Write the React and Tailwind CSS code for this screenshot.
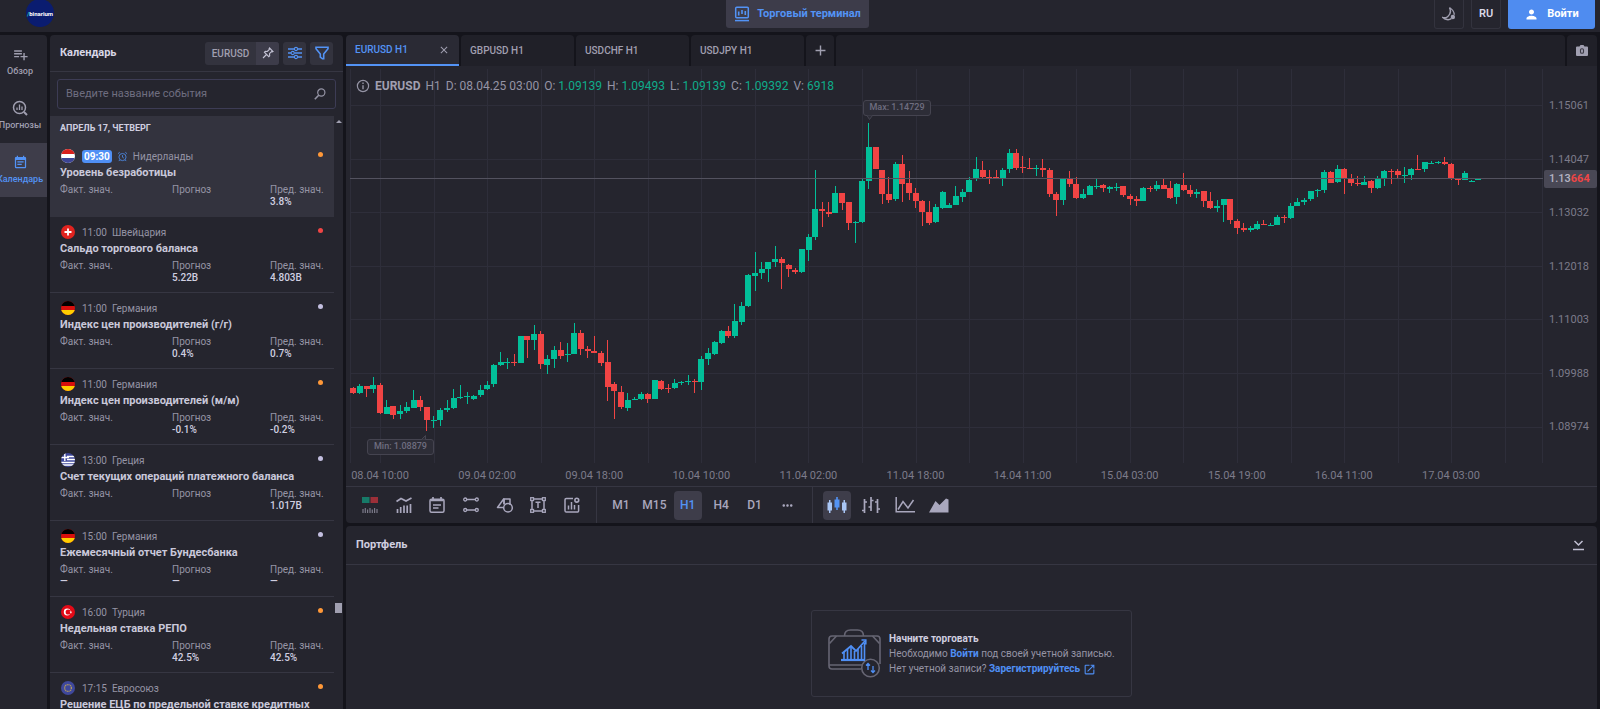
import {
  MdPlaylistAdd,
  MdOutlineOpenInNew,
  MdPerson,
  MdEventNote,
  MdAdd,
  MdClose,
  MdMoreHoriz,
} from "react-icons/md";

const PLOT_TOP = 69;
const PLOT_WIDTH = 1193;
const PLOT_HEIGHT = 394;
const STEP = 6.696;

// direction, high, body top, body bottom, low
const CANDLES = `
R387,388,393,394 G384,386,393,394 R386,386,389,397 G377,385,389,393 R383,385,413,414 G400,407,414,414
R406,406,415,419 G405,411,414,419 G402,407,411,413 G390,400,408,408 R396,400,407,411 R407,407,420,431
G416,420,421,428 G408,410,420,426 G400,408,410,412 G389,398,408,409 G385,397,398,399 G392,396,397,404
G395,396,399,400 G385,390,395,397 G381,385,389,390 G364,365,384,387 G352,362,365,366 G358,362,363,369
R354,362,363,366 G336,336,363,363 R336,336,340,358 G325,334,340,350 R331,334,364,369 G355,359,365,374
G346,350,359,368 R342,350,356,359 G343,354,355,362 G323,333,354,354 R330,333,349,355 R346,349,351,358
R336,351,353,353 R351,353,363,366 R340,362,387,401 R382,384,391,419 R386,392,407,409 G393,400,408,411
G397,399,400,400 G392,394,399,400 R393,394,399,403 G380,380,399,399 R380,381,389,390 R384,388,389,393
G379,383,388,389 G381,382,383,385 G375,381,382,385 R379,381,382,393 G356,359,382,390 G348,353,359,365
G341,342,354,355 G330,331,343,344 R326,331,336,338 G304,321,336,338 G302,306,322,325 G274,275,306,307
G252,273,276,291 G262,269,273,279 G262,262,269,282 G246,259,262,267 R257,259,263,289 R264,265,269,277
R268,270,272,274 G249,249,272,273 G234,237,250,261 G170,209,237,240 R202,209,211,227 R202,212,214,217
G186,193,213,213 R193,193,203,210 R202,202,223,230 G221,222,223,243 G179,181,222,223 G123,147,181,189
R147,147,169,169 R170,170,194,204 R177,194,200,203 G162,164,199,201 R155,164,184,202 R171,183,193,200
R188,193,201,208 R200,201,212,226 R201,212,223,225 G204,207,222,223 G191,192,208,209 G203,205,208,208
G186,196,205,205 G189,192,197,202 G177,180,192,192 G157,169,179,181 R161,170,177,178 R170,177,178,184
R170,177,179,179 G168,170,179,186 G149,153,169,173 R149,153,168,170 R156,167,168,173 R158,168,169,169
G165,168,169,176 R159,168,170,177 R168,170,194,197 R192,194,200,216 G179,179,200,205 R171,179,184,187
R177,184,198,199 G189,194,198,199 G185,186,195,195 G179,186,187,189 R184,185,188,192 G186,187,189,193
G183,187,188,191 R186,186,195,197 R194,196,199,205 R196,199,201,206 G187,188,201,201 R186,188,189,192
G181,185,189,191 R179,185,189,189 R181,188,198,199 G183,184,197,204 R173,185,190,191 R185,190,194,197
G189,192,194,198 R191,191,201,207 R192,201,208,209 G200,206,208,212 G199,199,205,222 R199,199,220,224
R219,221,228,234 R223,228,230,232 G226,228,230,232 G221,224,229,230 R220,224,225,225 G223,225,226,226
G215,217,225,225 R215,217,218,223 G203,206,218,219 G198,202,206,206 G198,200,202,205 G191,191,199,201
G189,190,191,197 G170,172,190,193 R171,172,183,183 G165,169,182,183 R168,169,179,194 R174,179,183,186
R176,183,184,186 G176,182,185,185 R180,181,188,193 G176,179,188,189 G170,171,179,186 R169,171,172,184
R169,171,175,178 G167,175,176,183 G168,169,175,180 R155,169,170,170 G162,162,169,172 G161,163,164,164
G161,162,163,164 R157,162,164,165 R163,164,179,180 R179,179,180,185 G171,173,180,180 G180,181,182,182
G178,179,180,180`
  .trim()
  .split(/\s+/)
  .map((s) => {
    const [high, top, bottom, low] = s.slice(1).split(",").map(Number);
    return { up: s[0] === "G", high, top, bottom, low };
  });

const PRICES = ["1.15061", "1.14047", "1.13032", "1.12018", "1.11003", "1.09988", "1.08974"];

const TIMES = [
  "08.04 10:00",
  "09.04 02:00",
  "09.04 18:00",
  "10.04 10:00",
  "11.04 02:00",
  "11.04 18:00",
  "14.04 11:00",
  "15.04 03:00",
  "15.04 19:00",
  "16.04 11:00",
  "17.04 03:00",
];

const EVENTS = [
  { time: "09:30", flag: "nl", country: "Нидерланды", title: "Уровень безработицы", values: ["", "", "3.8%"], level: "orange", soon: true },
  { time: "11:00", flag: "ch", country: "Швейцария", title: "Сальдо торгового баланса", values: ["", "5.22B", "4.803B"], level: "red" },
  { time: "11:00", flag: "de", country: "Германия", title: "Индекс цен производителей (г/г)", values: ["", "0.4%", "0.7%"], level: "gray" },
  { time: "11:00", flag: "de", country: "Германия", title: "Индекс цен производителей (м/м)", values: ["", "-0.1%", "-0.2%"], level: "orange" },
  { time: "13:00", flag: "gr", country: "Греция", title: "Счет текущих операций платежного баланса", values: ["", "", "1.017B"], level: "gray" },
  { time: "15:00", flag: "de", country: "Германия", title: "Ежемесячный отчет Бундесбанка", values: ["—", "—", "—"], level: "gray" },
  { time: "16:00", flag: "tr", country: "Турция", title: "Недельная ставка РЕПО", values: ["", "42.5%", "42.5%"], level: "orange" },
  { time: "17:15", flag: "eu", country: "Евросоюз", title: "Решение ЕЦБ по предельной ставке кредитных", values: ["", "", ""], level: "orange" },
];

const LABELS = ["Факт. знач.", "Прогноз", "Пред. знач."];

const LEVELS = {
  orange: "bg-[#ff9838]",
  red: "bg-[#f04545]",
  gray: "bg-[#c3bfe0]",
};

const Flag = ({ code }) => (
  <svg viewBox="0 0 14 14" className="size-[14px] shrink-0 rounded-full">
    {code === "nl" && (
      <>
        <rect width="14" height="14" fill="#fff" />
        <rect width="14" height="5" fill="#d8201c" />
        <rect y="9" width="14" height="5" fill="#3c4494" />
      </>
    )}
    {code === "ch" && (
      <>
        <rect width="14" height="14" fill="#e0231f" />
        <path d="M7 3.5v7M3.5 7h7" stroke="#fff" strokeWidth="1.8" />
      </>
    )}
    {code === "de" && (
      <>
        <rect width="14" height="14" fill="#d80f0c" />
        <rect width="14" height="5" fill="#000" />
        <rect y="9" width="14" height="5" fill="#ffce00" />
      </>
    )}
    {code === "gr" && (
      <>
        <rect width="14" height="14" fill="#3f489c" />
        <path d="M6 3.5h8M6 6.5h8M0 9.5h14M0 12h14" stroke="#fff" strokeWidth="1.3" />
        <path d="M3.8 0v8M0 4.5h8" stroke="#fff" strokeWidth="1.4" />
      </>
    )}
    {code === "tr" && (
      <>
        <rect width="14" height="14" fill="#e30a17" />
        <circle cx="6.2" cy="7" r="3.4" fill="#fff" />
        <circle cx="7.2" cy="7" r="2.6" fill="#e30a17" />
        <path d="M9.8 5.8l.4.9 1 .1-.8.6.3 1-.9-.6-.8.6.3-1-.8-.6 1-.1z" fill="#fff" />
      </>
    )}
    {code === "eu" && (
      <>
        <rect width="14" height="14" fill="#3f489c" />
        <circle cx="7" cy="7" r="3.4" fill="none" stroke="#b09a5c" strokeWidth="1.3" strokeDasharray="1.2 .58" />
      </>
    )}
  </svg>
);

const Icon = ({ size = "size-4", box = 16, children }) => (
  <svg
    viewBox={`0 0 ${box} ${box}`}
    className={`${size} shrink-0`}
    fill="none"
    stroke="currentColor"
    strokeWidth="1.5"
  >
    {children}
  </svg>
);

const Header = () => (
  <header className="grid h-8 shrink-0 grid-cols-[1fr_auto_1fr] items-start bg-[#25252e] pr-[5px]">
    <a
      href="#"
      className="ml-[26px] flex size-7 -mt-px items-center justify-center rounded-full bg-[#0a1c70] text-[6px] font-bold text-white"
    >
      <span className="text-[#1fc7a0]">/</span>binarium
    </a>
    <button className="flex h-7 w-[143px] items-center justify-center gap-[7px] rounded-b-[3px] bg-[#3d3c4a] text-[11px] font-bold whitespace-nowrap text-[#5393f5]">
      <Icon>
        <rect x="1.7" y="1.2" width="12.6" height="10.6" rx="1" />
        <path d="M1 14.6h14" />
        <path d="M4.7 5.5v4M8 4v4M11.3 5v4" strokeWidth="1.6" />
      </Icon>
      Торговый терминал
    </button>
    <div className="flex justify-end gap-[7px]">
      <button
        aria-label="Тема"
        className="flex h-[29px] w-[30px] items-center justify-center rounded-b-[3px] border border-t-0 border-[#33333e] text-[#a09fb0]"
      >
        <Icon size="size-3.5">
          <path d="M8.6.8c1.800 3.700.8 7.700-1.900 10-1.600 1.400-3.700 1.900-5.700 1.300 2.300 2.400 6.800 3.200 9.600 1.200" strokeWidth="1.700" />
          <path d="M8.600.8c3.400 1.700 5.300 5 5.400 8.200" strokeWidth="1.400" />
          <circle cx="12.400" cy="11.400" r="2.500" fill="currentColor" stroke="none" />
        </Icon>
      </button>
      <button className="h-[29px] w-[30px] rounded-b-[3px] border border-t-0 border-[#33333e] text-[11px] font-semibold text-[#d8d7e6]">
        RU
      </button>
      <button className="flex h-[29px] w-[87px] items-center justify-center gap-2 rounded-b-[3px] bg-[#4f8cf0] text-[11px] font-bold text-white">
        <MdPerson className="size-[15px]" />
        Войти
      </button>
    </div>
  </header>
);

const RailItem = ({ label, active, children }) => (
  <a
    href="#"
    className={`flex h-[54px] flex-col items-center gap-0.5 pt-[11px] pr-[7px] text-[9px] leading-[14px] font-medium whitespace-nowrap ${
      active ? "bg-[#3e3d4a] text-[#5393f5]" : "text-[#a09fb0]"
    }`}
  >
    <span className="flex h-4 items-center">{children}</span>
    {label}
  </a>
);

const Rail = () => (
  <nav className="w-[47px] shrink-0 overflow-hidden rounded-tr bg-[#25252e]">
    <RailItem label="Обзор">
      <MdPlaylistAdd className="size-[17px]" />
    </RailItem>
    <RailItem label="Прогнозы">
      <Icon>
        <circle cx="7.500" cy="7.500" r="6" />
        <path d="M12 12l3 3" strokeWidth="2" />
        <path d="M5 10V7.500M7.500 10V4.500M10 10V6.500" strokeWidth="1.300" />
      </Icon>
    </RailItem>
    <RailItem label="Календарь" active>
      <MdEventNote className="size-[15px]" />
    </RailItem>
  </nav>
);

const Event = ({ event }) => (
  <li
    className={`h-[76px] border-b pt-[7px] pr-[11px] pl-2.5 text-[10px] text-[#9594a5] ${
      event.soon ? "border-[#33333e] bg-[#33333e]" : "border-[#363642]"
    }`}
  >
    <div className="flex h-4 items-center pl-px">
      <Flag code={event.flag} />
      {event.soon ? (
        <>
          <span className="ml-[7px] rounded-[3px] bg-[#4f8ff5] px-0.5 leading-[13px] font-bold text-white">
            {event.time}
          </span>
          <svg viewBox="0 0 12 12" className="mx-[5px] size-[11px] text-[#4c86dd]" fill="none" stroke="currentColor">
            <circle cx="6" cy="6.600" r="3.900" />
            <path d="M6 4.500v2.300l1.500.9M1 3l2-1.700M11 3L9 1.300M3.200 9.500L2 11M8.800 9.500L10 11" />
          </svg>
        </>
      ) : (
        <span className="mr-[5px] ml-[7px]">{event.time}</span>
      )}
      <span>{event.country}</span>
      <span className={`mb-[3px] ml-auto size-[5px] rounded-full ${LEVELS[event.level]}`} />
    </div>
    <h3 className="text-[11px] leading-[17px] font-bold whitespace-nowrap text-[#c9c8da]">{event.title}</h3>
    <dl className="mt-[3px] grid grid-cols-[112px_98px_auto] leading-3 whitespace-nowrap">
      {LABELS.map((label, i) => (
        <div key={label}>
          <dt>{label}</dt>
          <dd className="font-medium text-[#d0cfe0]">{event.values[i]}</dd>
        </div>
      ))}
    </dl>
  </li>
);

const Calendar = () => (
  <aside className="flex w-[293px] shrink-0 flex-col overflow-hidden rounded-t bg-[#25252e]">
    <div className="flex h-[37px] shrink-0 items-center gap-1 border-b border-[#363642] pr-2.5 pl-2.5">
      <h2 className="mr-auto text-[11px] font-bold text-[#d8d7e6]">Календарь</h2>
      <div className="flex h-[23px] overflow-hidden rounded-[3px] bg-[#33333e] text-[#a09fb0]">
        <button className="w-[51px] text-[10px] font-medium">EURUSD</button>
        <button aria-label="Закрепить" className="flex w-[23px] items-center justify-center bg-[#3d3c4a] text-[#c3c2d4]">
          <Icon size="size-3" box={12}>
            <path d="M7.500 1l3.500 3.500-.9.400-.6-.200-2 2 .2 2-.9.900L2.400 5.200l.9-.9 2 .2 2-2-.2-.6zM4.500 7.500L1 11" strokeWidth="1.100" />
          </Icon>
        </button>
      </div>
      <button aria-label="Настройки" className="flex size-[23px] items-center justify-center rounded-[3px] bg-[#33333e] text-[#5393f5]">
        <Icon size="size-3.5" box={14}>
          <path d="M0 3h6M10 3h4M0 7h3M6.500 7H14M0 11h6M10 11h4" strokeWidth="1.300" />
          <circle cx="8" cy="3" r="1.600" strokeWidth="1.100" />
          <circle cx="4.700" cy="7" r="1.600" strokeWidth="1.100" />
          <circle cx="8" cy="11" r="1.600" strokeWidth="1.100" />
        </Icon>
      </button>
      <button aria-label="Фильтр" className="flex size-[23px] items-center justify-center rounded-[3px] bg-[#33333e] text-[#5393f5]">
        <Icon size="size-3.5" box={14}>
          <path d="M1 1.200h12v1.600L8.700 8v4.800H7.500L5.300 11V8L1 2.800z" strokeWidth="1.600" />
        </Icon>
      </button>
    </div>
    <label className="mx-[7px] mt-[7px] mb-[7px] flex h-[30px] shrink-0 items-center rounded-[3px] border border-[#3d3c55] pr-[9px] pl-2">
      <input
        type="text"
        aria-label="Введите название события"
        placeholder="Введите название события"
        className="min-w-0 flex-1 bg-transparent text-[11px] text-[#d8d7e6] outline-none placeholder:text-[#6f6e80]"
      />
      <Icon size="size-3" box={12}>
        <circle cx="7.300" cy="4.500" r="3.600" stroke="#9594a5" strokeWidth="1.200" />
        <path d="M4.700 7.200L.8 11.200" stroke="#9594a5" strokeWidth="1.600" />
      </Icon>
    </label>
    <div className="flex min-h-0 flex-1">
      <div className="min-w-0 flex-1 overflow-hidden">
        <p className="h-[25px] bg-[#33333e] pl-2.5 text-[9px] leading-[25px] font-bold text-[#d0cfe0]">АПРЕЛЬ 17, ЧЕТВЕРГ</p>
        <ul>
          {EVENTS.map((event) => (
            <Event key={event.title} event={event} />
          ))}
        </ul>
      </div>
      <div className="flex w-[9px] flex-col items-center pt-1">
        <span className="border-x-[3px] border-b-[3px] border-x-transparent border-b-[#a09fb0]" />
        <span className="mt-[480px] h-2.5 w-[7px] bg-[#a09fb0]" />
      </div>
    </div>
  </aside>
);

const Tabs = () => (
  <div className="flex h-[31px] shrink-0 gap-0.5 bg-[#14141b] text-[10px] font-medium text-[#a09fb0]">
    <div className="flex w-[113px] items-center justify-between rounded-t border-b-2 border-[#5393f5] bg-[#2a2a34] px-[9px]">
      <button className="text-[#5393f5]">EURUSD H1</button>
      <button aria-label="Закрыть">
        <MdClose className="size-3" />
      </button>
    </div>
    {["GBPUSD H1", "USDCHF H1", "USDJPY H1"].map((name) => (
      <button key={name} className="h-[31px] w-[113px] rounded-t bg-[#202028] px-[9px] text-left">
        {name}
      </button>
    ))}
    <button aria-label="Добавить" className="flex h-[31px] w-7 items-center justify-center rounded-t bg-[#202028]">
      <MdAdd className="size-[17px]" />
    </button>
    <div className="h-[31px] flex-1 rounded-t bg-[#202028]" />
    <button aria-label="Снимок" className="flex h-[31px] w-[30px] items-center justify-center rounded-t bg-[#202028]">
      <svg viewBox="0 0 12 11" className="h-[11px] w-3" fill="currentColor">
        <path d="M1 1.500h2.500L4.500 0h3l1 1.500H11a1 1 0 0 1 1 1V10a1 1 0 0 1-1 1H1a1 1 0 0 1-1-1V2.500a1 1 0 0 1 1-1z" />
        <rect x="4.500" y="3.700" width="3" height="4.600" rx="1.300" fill="none" stroke="#3a3944" strokeWidth="1.100" />
      </svg>
    </button>
  </div>
);

const Plot = () => (
  <svg
    viewBox={`0 ${PLOT_TOP} ${PLOT_WIDTH} ${PLOT_HEIGHT}`}
    preserveAspectRatio="none"
    shapeRendering="crispEdges"
    className="block size-full"
  >
    {PRICES.map((price, i) => (
      <rect key={price} x="0" y={Math.round(105 + i * 53.6)} width={PLOT_WIDTH} height="1" fill="#2e2e3a" />
    ))}
    {Array.from({ length: 22 }, (_, i) => (
      <rect key={i} x={Math.round(30 + i * 53.56)} y={PLOT_TOP} width="1" height={PLOT_HEIGHT} fill="#2e2e3a" />
    ))}
    <rect x="0" y={PLOT_TOP} width="1" height={PLOT_HEIGHT} fill="#2e2e3a" />
    <rect x={PLOT_WIDTH - 1} y={PLOT_TOP} width="1" height={PLOT_HEIGHT} fill="#2e2e3a" />
    {CANDLES.map((c, i) => {
      const x = 3.3 + i * STEP;
      return (
        <g key={i} fill={c.up ? "#02bf99" : "#f14444"}>
          <rect x={Math.round(x - 0.5)} y={c.high} width="1" height={c.low - c.high} />
          <rect x={Math.round(x - 3)} y={c.top} width="6" height={Math.max(c.bottom - c.top, 1)} />
        </g>
      );
    })}
    <rect x="0" y="178" width={PLOT_WIDTH} height="1" fill="#53525f" />
  </svg>
);

const Quote = ({ name, value }) => (
  <span>
    {name}: <span className="text-[#0fab8a]">{value}</span>
  </span>
);

const Chart = () => (
  <section className="relative flex min-h-0 flex-1 flex-col bg-[#25252e]">
    <div className="mt-[3px] ml-1 flex min-h-0 flex-1">
      <div className="relative min-w-0 flex-1">
        <Plot />
        <div className="absolute top-[9px] left-1.5 flex items-center gap-[5px] text-xs leading-4 whitespace-nowrap text-[#9594a5]">
          <Icon size="size-3.5" box={14}>
            <circle cx="7" cy="7" r="5.600" strokeWidth="1.200" />
            <path d="M7 6.200v4M7 3.500v1.500" strokeWidth="1.400" />
          </Icon>
          <b className="font-bold text-[#a09fb0]">EURUSD</b>
          <span>H1</span>
          <span>D: 08.04.25 03:00</span>
          <Quote name="O" value="1.09139" />
          <Quote name="H" value="1.09493" />
          <Quote name="L" value="1.09139" />
          <Quote name="C" value="1.09392" />
          <Quote name="V" value="6918" />
        </div>
        <div className="absolute top-[31px] left-[43%] flex h-4 w-[68px] items-center justify-center rounded-[3px] border border-[#454450] bg-[#2d2d37] text-[9px] font-medium whitespace-nowrap text-[#6f6e80]">
          Max: 1.14729
          <svg viewBox="0 0 6 5" className="absolute top-[14px] left-[3px] h-[5px] w-1.5" fill="#2d2d37" stroke="#454450">
            <path d="M0 .5L2.500 4.500 5.500.5" />
          </svg>
        </div>
        <div className="absolute bottom-2 left-[17px] flex h-4 w-[67px] items-center justify-center rounded-[3px] border border-[#454450] bg-[#2d2d37] text-[9px] font-medium whitespace-nowrap text-[#6f6e80]">
          Min: 1.08879
          <svg viewBox="0 0 6 5" className="absolute -top-[5px] right-[6px] h-[5px] w-1.5" fill="#2d2d37" stroke="#454450">
            <path d="M.5 4.500L4.500.5v4" />
          </svg>
        </div>
      </div>
      <div className="relative flex w-[54px] flex-col justify-between pt-[29px] pb-7 pl-1.5 text-[11px] leading-4 text-[#7c7b8a]">
        {PRICES.map((price) => (
          <span key={price}>{price}</span>
        ))}
        <strong className="absolute top-[101px] right-0 left-px rounded-[2px] bg-[#494855] pl-[5px] leading-[18px] font-medium text-[#b5b4c4]">
          1.13<span className="font-bold text-[#f04545]">664</span>
        </strong>
      </div>
    </div>
    <div className="flex h-[23px] shrink-0 items-center justify-between pt-[3px] pr-[117px] pl-[5px] text-[11px] text-[#7c7b8a]">
      {TIMES.map((time) => (
        <span key={time} className="flex w-[58px] justify-center whitespace-nowrap">
          {time}
        </span>
      ))}
    </div>
  </section>
);

const Tool = ({ label, active, children }) => (
  <button
    aria-label={label}
    className={`flex h-[29px] w-7 items-center justify-center rounded-[4px] ${active ? "bg-[#3e3d4a] text-[#5393f5]" : ""}`}
  >
    {children}
  </button>
);

const Toolbar = () => (
  <div className="flex h-[37px] shrink-0 rounded-b border-t border-[#363642] bg-[#25252e] text-[#a9a7bd]">
    <div className="flex w-[251px] items-center justify-between border-r border-[#363642] px-2.5">
      <Tool label="Покупка и продажа">
        <Icon>
          <rect width="7.500" height="6" y="0" fill="#177a68" stroke="none" />
          <rect width="7.500" height="6" x="8.500" y="0" fill="#9c2f38" stroke="none" />
          <path d="M1 16v-4M3.300 16v-5M5.600 16v-3.500M8 16v-5M10.300 16v-3.500M12.600 16v-5M15 16v-4" stroke="#7c7b8a" strokeWidth="1.200" />
        </Icon>
      </Tool>
      <Tool label="Индикаторы">
        <Icon>
          <path d="M.5 4.500l4.500-3 5 2.500 5.500-3" strokeWidth="1.700" />
          <path d="M1.500 16v-4M4.700 16v-6M8 16V8.500M11.200 16v-7.500M14.500 16V7" strokeWidth="1.700" />
        </Icon>
      </Tool>
      <Tool label="События">
        <Icon>
          <rect x="1" y="2.200" width="14" height="13" rx="1.500" />
          <path d="M4 0v4M12 0v4M1.500 3.500h13M4 8h8M4 11h5.500" strokeWidth="1.700" />
        </Icon>
      </Tool>
      <Tool label="Линии">
        <Icon>
          <path d="M3.500 2.500h9M3.500 13h9" strokeWidth="1.600" />
          <g strokeWidth="1.300">
            <circle cx="2.200" cy="2.500" r="1.500" />
            <circle cx="13.800" cy="2.500" r="1.500" />
            <circle cx="2.200" cy="13" r="1.500" />
            <circle cx="13.800" cy="13" r="1.500" />
          </g>
        </Icon>
      </Tool>
      <Tool label="Фигуры">
        <svg viewBox="0 0 18 16" className="h-4 w-[18px]" fill="none" stroke="currentColor" strokeWidth="1.500">
          <path d="M7.500 10.500H1.500L8 1.500M8 1.500V7" strokeLinejoin="round" />
          <path d="M8 7.500V2h6v6" strokeLinejoin="round" />
          <circle cx="12" cy="10.700" r="4.300" />
        </svg>
      </Tool>
      <Tool label="Текст">
        <Icon>
          <path d="M3.500 2h9M3.500 14h9M2 3.500v9M14 3.500v9" />
          <g strokeWidth="1.300">
            <rect x=".7" y=".7" width="2.800" height="2.800" />
            <rect x="12.500" y=".7" width="2.800" height="2.800" />
            <rect x=".7" y="12.500" width="2.800" height="2.800" />
            <rect x="12.500" y="12.500" width="2.800" height="2.800" />
          </g>
          <path d="M5.500 5.300h5M8 5.300V11" />
        </Icon>
      </Tool>
      <Tool label="Настройки графика">
        <Icon>
          <path d="M9 1.500H2.300A1.300 1.300 0 0 0 1 2.800v11A1.300 1.300 0 0 0 2.300 15h11a1.300 1.300 0 0 0 1.300-1.300V8" />
          <circle cx="12.800" cy="3.200" r="1.900" strokeWidth="1.600" />
          <path d="M4.500 12.500v-4M7.500 12.500V5M10.500 12.500V8" />
        </Icon>
      </Tool>
    </div>
    <div className="flex w-[216px] items-center justify-between border-r border-[#363642] px-2.5 text-xs font-medium">
      {["M1", "M15", "H1", "H4", "D1"].map((period) => (
        <Tool key={period} label={period} active={period === "H1"}>
          {period}
        </Tool>
      ))}
      <Tool label="Ещё">
        <MdMoreHoriz className="size-[15px]" />
      </Tool>
    </div>
    <div className="flex items-center gap-1.5 pl-2.5">
      <Tool label="Свечи" active>
        <svg viewBox="0 0 20 16" className="h-4 w-5" fill="currentColor">
          <path d="M7.500 2.500h1.700V0h1.600v2.500h1.700v8h-1.700V13H9.200v-2.500H7.500z" />
          <path d="M.5 5.500h1.500V3h1.500v2.500H5v8H3.500V16H2v-2.500H.5zM15 5.500h1.500V3H18v2.500h1.500v8H18V16h-1.500v-2.500H15z" fill="#a9c6f5" />
        </svg>
      </Tool>
      <Tool label="Бары">
        <svg viewBox="0 0 20 16" className="h-4 w-5" fill="none" stroke="currentColor" strokeWidth="1.700">
          <path d="M3.500 2v14M1 13.500h2.500M3.500 5H6M10 0v14M7.500 10H10M10 3.500h2.500M16.500 2v14M14 5h2.500M16.500 12H19" />
        </svg>
      </Tool>
      <Tool label="Линия">
        <svg viewBox="0 0 20 16" className="h-4 w-5" fill="none" stroke="currentColor" strokeWidth="1.500">
          <path d="M1.200 0v14.800H20M3 12.500l5-8 5 6.500 5.500-8" />
        </svg>
      </Tool>
      <Tool label="Область">
        <svg viewBox="0 0 20 16" className="h-4 w-5" fill="currentColor">
          <path d="M0 15.500L6.500 4l4 4L17 1.500l2.500 1v13z" />
        </svg>
      </Tool>
    </div>
  </div>
);

const Portfolio = () => (
  <section className="mt-[3px] shrink-0 rounded-t bg-[#25252e]">
    <div className="flex h-[39px] items-center justify-between border-b border-[#363642] pr-[13px] pl-2.5">
      <h2 className="text-[11px] font-bold text-[#d0cfe0]">Портфель</h2>
      <button aria-label="Свернуть" className="text-[#c0bfd2]">
        <svg viewBox="0 0 11 11" className="size-[11px]" fill="none" stroke="currentColor" strokeWidth="1.500">
          <path d="M1.500 1l4 4 4-4M0 9.500h11" />
        </svg>
      </button>
    </div>
    <div className="flex justify-center pt-[45px] pb-3">
      <div className="flex h-[87px] w-[321px] items-center gap-2 rounded-[3px] border border-[#363642] pl-4 text-[10px] leading-[15px] whitespace-nowrap text-[#9594a5]">
        <svg viewBox="0 0 53 49" className="h-[49px] w-[53px] shrink-0" fill="none" stroke="#666573" strokeWidth="1.600">
          <path d="M16.500 7c0-3.500 2-6 6-6h7c4 0 6 2.500 6 6" />
          <path d="M33 40H4a3 3 0 0 1-3-3V10a3 3 0 0 1 3-3h45a3 3 0 0 1 3 3v25" />
          <path d="M1 36h33M1.500 14.500L8.500 7M44.500 7l7 7.500" />
          <circle cx="42.500" cy="39" r="8.800" fill="#25252e" />
          <g stroke="#4f8ff5">
            <path d="M14 24.500l9-7.500 5 5 9-10" strokeWidth="1.800" />
            <path d="M33.500 11h4.300v4.500" strokeWidth="1.600" />
            <path d="M13 31h24" strokeWidth="2.200" />
            <path d="M16 31v-8M19.500 31V20M23 31V18M26.500 31v-9M30 31V20M33.500 31V17M36.500 31V14" strokeWidth="1.600" />
            <path d="M40 41v-6.500M38 36.500l2-2 2 2M45 37v6.500M43 41.500l2 2 2-2" strokeWidth="1.300" />
          </g>
        </svg>
        <div>
          <p className="font-bold text-[#d0cfe0]">Начните торговать</p>
          <p>
            Необходимо{" "}
            <a href="#" className="font-bold text-[#4f8ff5]">
              Войти
            </a>{" "}
            под своей учетной записью.
          </p>
          <p>
            Нет учетной записи?{" "}
            <a href="#" className="font-bold text-[#4f8ff5]">
              Зарегистрируйтесь <MdOutlineOpenInNew className="inline size-[13px]" />
            </a>
          </p>
        </div>
      </div>
    </div>
  </section>
);

const App = () => {
  return (
    <div className="flex h-screen flex-col gap-[3px] overflow-hidden bg-[#14141b] font-['Roboto',sans-serif]">
      <Header />
      <div className="flex min-h-0 flex-1 gap-[3px] pr-[3px]">
        <Rail />
        <Calendar />
        <main className="flex min-w-0 flex-1 flex-col">
          <Tabs />
          <Chart />
          <Toolbar />
          <Portfolio />
        </main>
      </div>
    </div>
  );
};

export default App;
